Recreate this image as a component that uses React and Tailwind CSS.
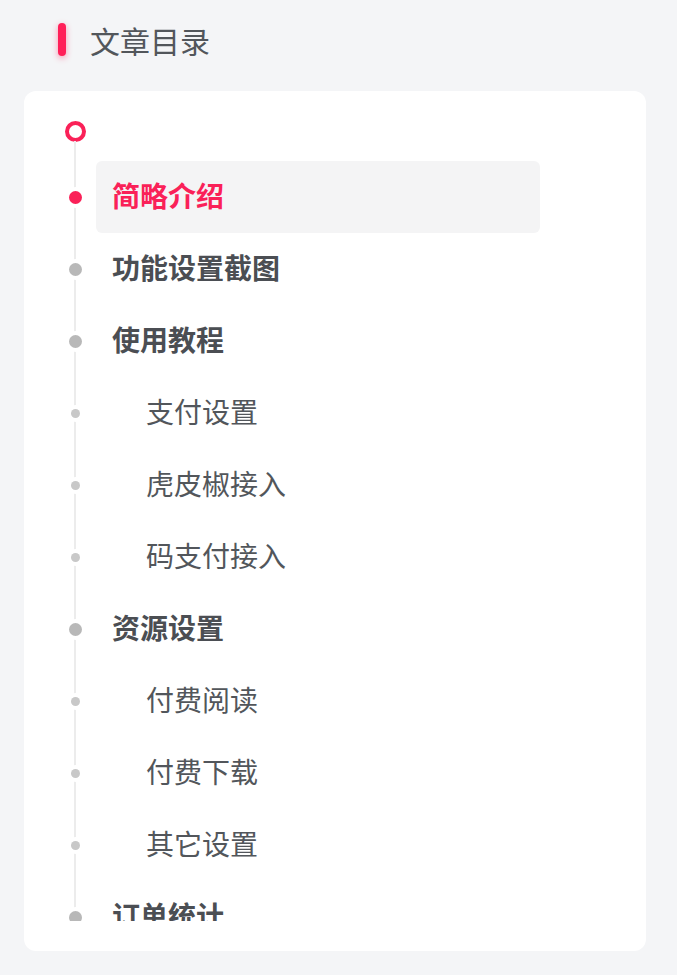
import React from "react";

const items = [
  { title: "简略介绍", level: 1, active: true },
  { title: "功能设置截图", level: 1 },
  { title: "使用教程", level: 1 },
  { title: "支付设置", level: 2 },
  { title: "虎皮椒接入", level: 2 },
  { title: "码支付接入", level: 2 },
  { title: "资源设置", level: 1 },
  { title: "付费阅读", level: 2 },
  { title: "付费下载", level: 2 },
  { title: "其它设置", level: 2 },
  { title: "订单统计", level: 1 },
];

const TocRow = ({ item }) => {
  let dot = "w-[13px] h-[13px] bg-[#b8b8b8]";
  if (item.level === 2) dot = "w-[9px] h-[9px] bg-[#c8c8c8]";
  if (item.active) dot = "w-[13px] h-[13px] bg-[#fa2158]";

  return (
    <div className="flex items-center h-[72px]">
      <div className="w-[24px] flex justify-center relative z-10">
        <span className={"rounded-full ring-4 ring-white " + dot}></span>
      </div>
      <div
        className={
          "ml-[9px] w-[444px] h-[72px] flex items-center rounded-md pb-[4px] " +
          (item.active ? "bg-[#f4f4f5] " : "") +
          (item.level === 2 ? "pl-[50px]" : "pl-4")
        }
      >
        <span
          className={
            "text-[28px] leading-none " +
            (item.active
              ? "font-bold text-[#fa2158]"
              : item.level === 1
              ? "font-bold text-[#4b4e53]"
              : "text-[#52565b]")
          }
        >
          {item.title}
        </span>
      </div>
    </div>
  );
};

export default function App() {
  return (
    <div
      className="w-[677px] h-[975px] bg-[#f4f5f7] px-6 pt-[23px]"
      style={{ fontFamily: '"Noto Sans CJK SC", "Noto Sans", sans-serif' }}
    >
      {/* header */}
      <div className="flex items-center pl-[34px] h-[33px]">
        <span className="w-[8px] h-[33px] rounded-full bg-[#ff1f58] shadow-[0_2px_6px_rgba(255,31,88,0.45)]"></span>
        <h2 className="ml-[24px] text-[30px] leading-none text-[#52565b]">文章目录</h2>
      </div>

      {/* toc card */}
      <div className="mt-[35px] w-[622px] bg-white rounded-xl pl-[39px] py-[30px]">
        <div className="relative h-[800px] overflow-hidden">
          <div className="absolute left-[11px] top-[20px] bottom-0 w-[2px] bg-[#ececec]"></div>
          <div className="w-[24px] h-[22px] flex justify-center">
            <span className="w-[21px] h-[21px] rounded-full border-[4px] border-[#fa2158] bg-white"></span>
          </div>
          <div className="mt-[18px]">
            {items.map((item) => (
              <TocRow key={item.title} item={item} />
            ))}
          </div>
        </div>
      </div>
    </div>
  );
}
